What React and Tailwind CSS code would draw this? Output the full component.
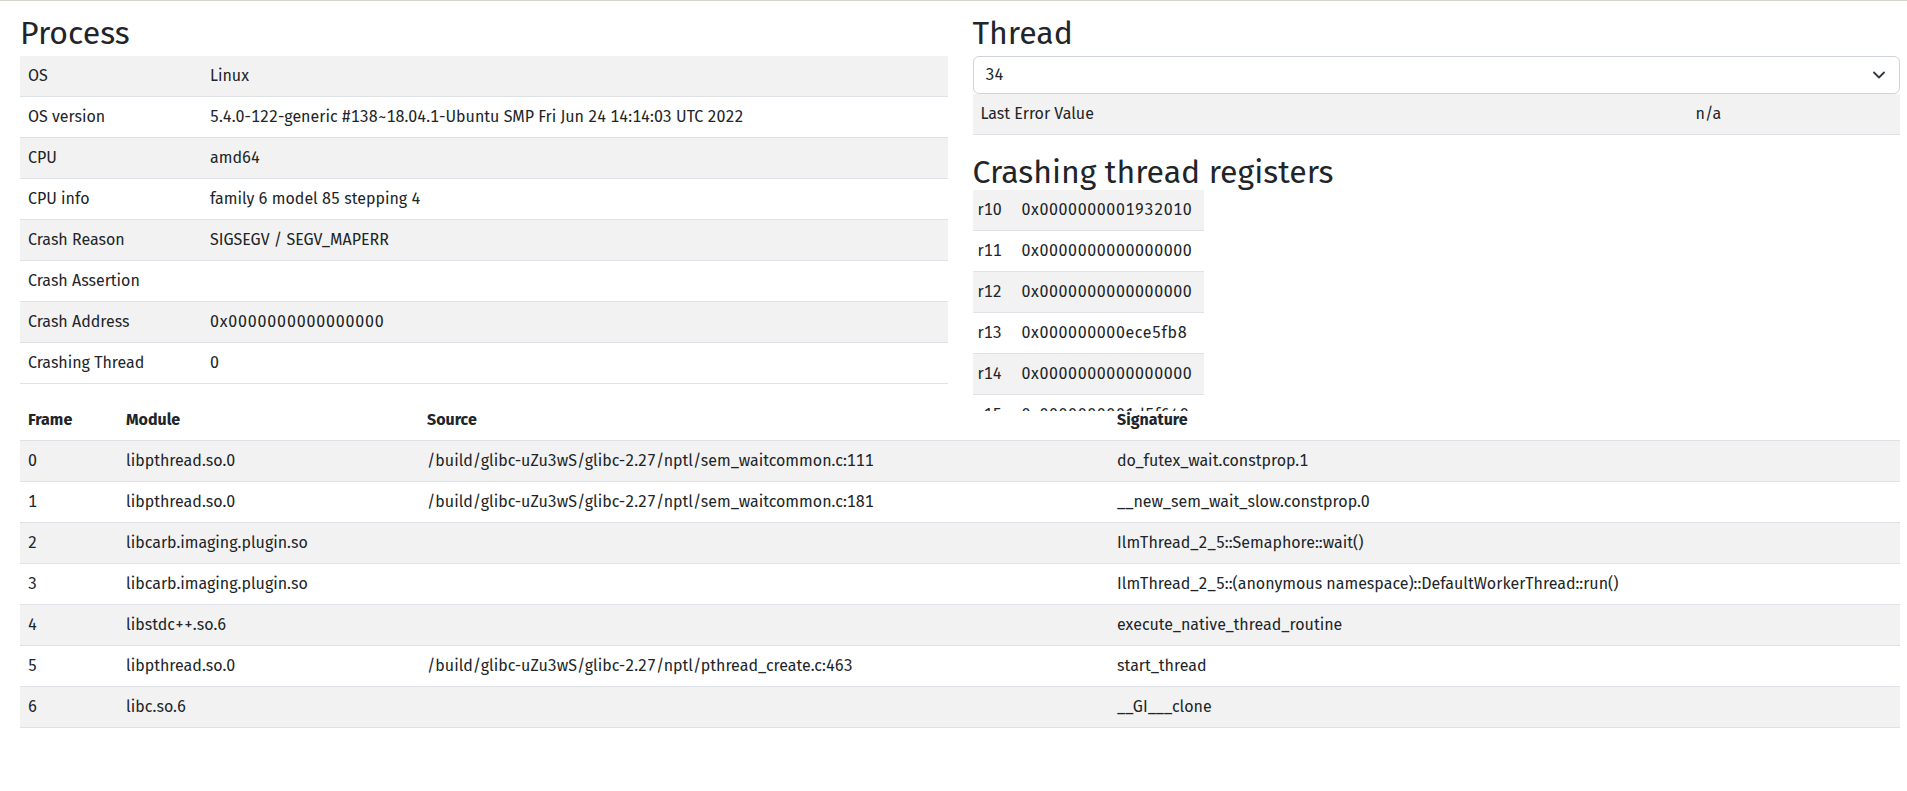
import React from "react";

const processRows = [
  ["OS", "Linux"],
  ["OS version", "5.4.0-122-generic #138~18.04.1-Ubuntu SMP Fri Jun 24 14:14:03 UTC 2022"],
  ["CPU", "amd64"],
  ["CPU info", "family 6 model 85 stepping 4"],
  ["Crash Reason", "SIGSEGV / SEGV_MAPERR"],
  ["Crash Assertion", ""],
  ["Crash Address", "0x0000000000000000"],
  ["Crashing Thread", "0"],
];

const registers = [
  ["r10", "0x0000000001932010"],
  ["r11", "0x0000000000000000"],
  ["r12", "0x0000000000000000"],
  ["r13", "0x000000000ece5fb8"],
  ["r14", "0x0000000000000000"],
  ["r15", "0x0000000001d5f640"],
  ["r8", "0x0000000000000000"],
  ["r9", "0x0000000000000000"],
  ["rax", "0xfffffffffffffe00"],
];

const frames = [
  ["0", "libpthread.so.0", "/build/glibc-uZu3wS/glibc-2.27/nptl/sem_waitcommon.c:111", "do_futex_wait.constprop.1"],
  ["1", "libpthread.so.0", "/build/glibc-uZu3wS/glibc-2.27/nptl/sem_waitcommon.c:181", "__new_sem_wait_slow.constprop.0"],
  ["2", "libcarb.imaging.plugin.so", "", "IlmThread_2_5::Semaphore::wait()"],
  ["3", "libcarb.imaging.plugin.so", "", "IlmThread_2_5::(anonymous namespace)::DefaultWorkerThread::run()"],
  ["4", "libstdc++.so.6", "", "execute_native_thread_routine"],
  ["5", "libpthread.so.0", "/build/glibc-uZu3wS/glibc-2.27/nptl/pthread_create.c:463", "start_thread"],
  ["6", "libc.so.6", "", "__GI___clone"],
];

function Heading({ children, className = "" }) {
  return (
    <h2 className={"text-[32px] leading-[38px] font-normal whitespace-nowrap " + className}>
      {children}
    </h2>
  );
}

function isHex(v) {
  return v.startsWith("0x");
}

export default function App() {
  return (
    <div className="min-h-screen bg-white border-t border-[#d6d2ce] text-[#212529] text-base tabular-nums font-['Fira_Sans','Noto_Sans',sans-serif]">
      <div className="pl-[20px] pr-[7px] pt-[13px]">
        <div className="grid grid-cols-2 gap-x-[25px] h-[370px] items-start">
          {/* Process */}
          <div>
            <Heading className="mb-[4px]">Process</Heading>
            <table className="w-full border-collapse table-fixed">
              <colgroup>
                <col className="w-[182px]" />
                <col />
              </colgroup>
              <tbody>
                {processRows.map(([k, v], i) => (
                  <tr key={k} className={i % 2 === 0 ? "bg-[#f2f2f2]" : "bg-white"}>
                    <td className="px-2 py-2 leading-6 border-b border-[#dee2e6] whitespace-nowrap">{k}</td>
                    <td className={"px-2 py-2 leading-6 border-b border-[#dee2e6] whitespace-nowrap " + (isHex(v) ? "tracking-[0.8px]" : "")}>{v}</td>
                  </tr>
                ))}
              </tbody>
            </table>
          </div>

          {/* Thread */}
          <div>
            <Heading className="mb-[4px]">Thread</Heading>
            <div className="flex items-center justify-between h-[38px] border border-[#ced4da] rounded-[6px] pl-[12px] pr-[14px] bg-white">
              <span className="leading-6">34</span>
              <svg width="12" height="8" viewBox="0 0 12 8" fill="none">
                <path d="M1 1.5 L6 6.5 L11 1.5" stroke="#343a40" strokeWidth="1.8" strokeLinecap="round" strokeLinejoin="round" />
              </svg>
            </div>
            <table className="w-full border-collapse table-fixed">
              <colgroup>
                <col className="w-[715px]" />
                <col />
              </colgroup>
              <tbody>
                <tr className="bg-[#f2f2f2]">
                  <td className="px-2 py-2 leading-6 border-b border-[#dee2e6]">Last Error Value</td>
                  <td className="px-2 py-2 leading-6 border-b border-[#dee2e6]">n/a</td>
                </tr>
              </tbody>
            </table>

            <Heading className="mt-[18px] -mb-px">Crashing thread registers</Heading>
            <div className="w-[231px] h-[221px] overflow-hidden">
              <table className="w-full border-collapse table-fixed">
                <colgroup>
                  <col className="w-[43px]" />
                  <col />
                </colgroup>
                <tbody>
                  {registers.map(([r, v], i) => (
                    <tr key={r} className={i % 2 === 0 ? "bg-[#f2f2f2]" : "bg-white"}>
                      <td className="pl-[5px] py-2 leading-6 border-b border-[#dee2e6]">{r}</td>
                      <td className="pl-[6px] py-2 leading-6 border-b border-[#dee2e6] whitespace-nowrap tracking-[0.6px]">{v}</td>
                    </tr>
                  ))}
                </tbody>
              </table>
            </div>
          </div>
        </div>

        {/* Frames */}
        <table className="w-full mt-[16px] border-collapse table-fixed">
          <colgroup>
            <col className="w-[98px]" />
            <col className="w-[301px]" />
            <col className="w-[690px]" />
            <col />
          </colgroup>
          <thead>
            <tr>
              {["Frame", "Module", "Source", "Signature"].map((h) => (
                <th key={h} className="text-left font-bold px-2 py-2 leading-6 border-b border-[#dee2e6]">{h}</th>
              ))}
            </tr>
          </thead>
          <tbody>
            {frames.map((f, i) => (
              <tr key={f[0]} className={i % 2 === 0 ? "bg-[#f2f2f2]" : "bg-white"}>
                {f.map((c, j) => (
                  <td key={j} className="px-2 py-2 leading-6 border-b border-[#dee2e6] whitespace-nowrap">{c}</td>
                ))}
              </tr>
            ))}
          </tbody>
        </table>
      </div>
    </div>
  );
}
